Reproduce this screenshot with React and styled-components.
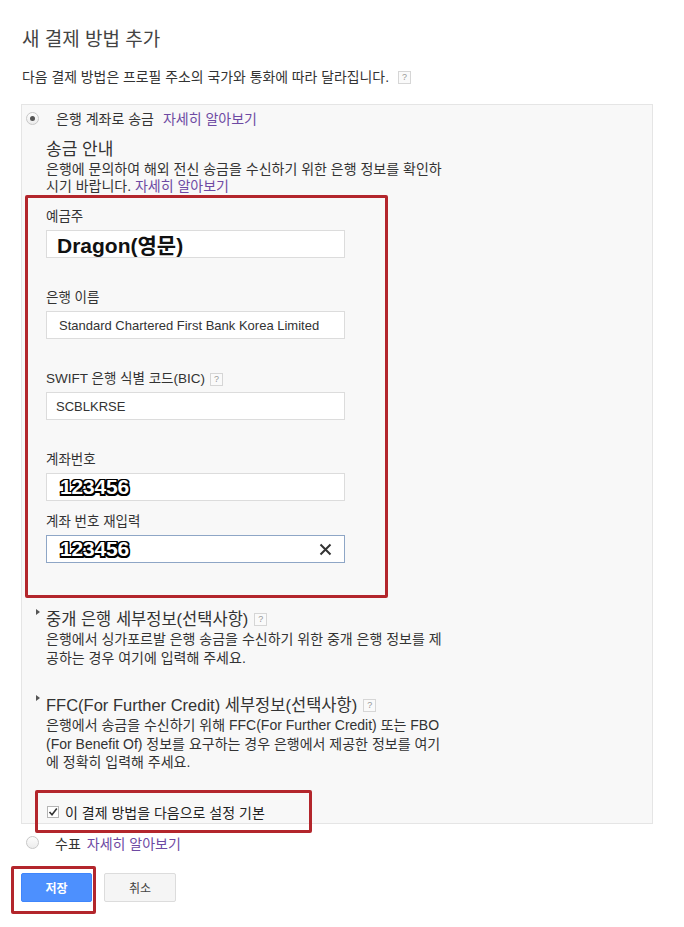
import React from "react";
import styled, { createGlobalStyle } from "styled-components";

const Global = createGlobalStyle`
  html, body { margin: 0; padding: 0; background: #fff; }
  body {
    font-family: "Liberation Sans", "Noto Sans CJK KR", Arial, sans-serif;
    color: #333;
    -webkit-font-smoothing: antialiased;
  }
`;

const Page = styled.div`
  padding: 28px 0 24px 21px;
  width: 630px;
`;

const Title = styled.h1`
  margin: 0;
  padding-left: 1px;
  font-size: 19px;
  line-height: 24px;
  font-weight: 400;
  color: #444;
`;

const Subtitle = styled.p`
  margin: 16px 0 0;
  padding-left: 1px;
  font-size: 13.9px;
  line-height: 18px;
  color: #333;
  display: flex;
  align-items: center;
  gap: 5px;
`;

const Help = styled.span`
  display: inline-flex;
  align-items: center;
  justify-content: center;
  width: 11px;
  height: 11px;
  border: 1px solid #d6d6d6;
  background: #fafafa;
  color: #999;
  font-size: 9px;
  line-height: 1;
  font-family: "Liberation Sans", Arial, sans-serif;
  vertical-align: middle;
  margin-left: ${(p) => p.$ml || 4}px;
`;

const Panel = styled.div`
  margin-top: 18px;
  width: 627px;
  background: #f8f8f8;
  border: 1px solid #e5e5e5;
  padding: 3px 0 1px 3px;
`;

const RadioRow = styled.div`
  display: flex;
  align-items: center;
  height: 20px;
  margin-left: ${(p) => p.$ml || 0}px;
  margin-top: ${(p) => p.$mt || 0}px;
  font-size: 14px;
  color: #333;
`;

const Radio = styled.span`
  width: 11px;
  height: 11px;
  border-radius: 50%;
  border: 1px solid #c8c8c8;
  background: linear-gradient(#fdfdfd, #ececec);
  display: inline-flex;
  align-items: center;
  justify-content: center;
  margin-right: ${(p) => p.$gap}px;
  flex: none;
  &::after {
    content: "";
    display: ${(p) => (p.$checked ? "block" : "none")};
    width: 5px;
    height: 5px;
    border-radius: 50%;
    background: #555;
  }
`;

const Link = styled.a`
  color: #6e4aa3;
  text-decoration: none;
  margin-left: ${(p) => p.$ml || 0}px;
`;

const InfoTitle = styled.div`
  margin-top: 11px;
  font-size: 17px;
  line-height: 22px;
  color: #333;
  margin-left: 21px;
`;

const Desc = styled.div`
  font-size: 14px;
  line-height: ${(p) => p.$lh || 17}px;
  color: #333;
  margin-left: ${(p) => p.$ml || 0}px;
`;

const Line = styled.span`
  display: block;
  white-space: nowrap;
`;

const Fields = styled.div`
  width: 339px;
  border: 3px solid #b3262c;
  border-radius: 2px;
  padding: 10px 0 32px 18px;
  box-sizing: content-box;
`;

const Field = styled.div`
  margin-top: ${(p) => p.$mt}px;
`;

const Label = styled.div`
  font-size: 13.5px;
  line-height: 16px;
  color: #333;
  display: flex;
  align-items: center;
  padding-top: 1px;
`;

const Input = styled.div`
  margin-top: 5px;
  width: 299px;
  height: 28px;
  box-sizing: border-box;
  background: #fff;
  border: 1px solid ${(p) => (p.$focus ? "#8ea6c6" : "#dcdcdc")};
  display: flex;
  align-items: center;
  justify-content: space-between;
  padding: 0 12px 0 ${(p) => p.$pl || 10}px;
  font-size: 13px;
  color: #333;
`;

const BigName = styled.span`
  font-size: 21px;
  font-weight: 700;
  color: #111;
`;

const Outlined = styled.span`
  font-size: 21px;
  font-weight: 700;
  color: #fff;
  letter-spacing: -0.2px;
  text-shadow:
    -1.5px -1.5px 0 #000, 1.5px -1.5px 0 #000, -1.5px 1.5px 0 #000, 1.5px 1.5px 0 #000,
    0 -1.5px 0 #000, 0 1.5px 0 #000, -1.5px 0 0 #000, 1.5px 0 0 #000;
`;

const Section = styled.div`
  margin-top: ${(p) => p.$mt}px;
`;

const SectionTitle = styled.div`
  font-size: 16.5px;
  line-height: 22px;
  color: #333;
  margin-left: 21px;
  display: flex;
  align-items: center;
  position: relative;
`;

const Caret = styled.span`
  position: absolute;
  left: -10px;
  top: 1px;
  width: 0;
  height: 0;
  border-top: 3.5px solid transparent;
  border-bottom: 3.5px solid transparent;
  border-left: 4px solid #555;
`;

const CheckRow = styled.div`
  position: relative;
  margin: 30px 0 0 22px;
  height: 20px;
  display: flex;
  align-items: center;
  font-size: 14px;
  color: #222;
`;

const Checkbox = styled.span`
  width: 10px;
  height: 10px;
  border: 1px solid #b5b5b5;
  background: #fff;
  display: inline-flex;
  align-items: center;
  justify-content: center;
  margin-right: 6px;
  flex: none;
`;

const Annotation = styled.span`
  position: absolute;
  border: 3px solid #b3262c;
  border-radius: 2px;
  pointer-events: none;
  left: ${(p) => p.$l}px;
  top: ${(p) => p.$t}px;
  width: ${(p) => p.$w}px;
  height: ${(p) => p.$h}px;
  box-sizing: border-box;
`;

const Buttons = styled.div`
  margin-top: 20px;
  display: flex;
  gap: 12px;
`;

const BtnWrap = styled.div`
  position: relative;
`;

const Button = styled.button`
  width: ${(p) => p.$w}px;
  height: 29px;
  border-radius: 2px;
  font-family: "Liberation Sans", "Noto Sans CJK KR", sans-serif;
  font-size: 12px;
  cursor: pointer;
  color: ${(p) => (p.$primary ? "#fff" : "#444")};
  background: ${(p) => (p.$primary ? "#4d90fe" : "#f5f5f5")};
  border: 1px solid ${(p) => (p.$primary ? "#3f86fc" : "#dcdcdc")};
  font-weight: ${(p) => (p.$primary ? 700 : 400)};
`;

export default function App() {
  return (
    <Page>
      <Global />
      <Title>새 결제 방법 추가</Title>
      <Subtitle>
        다음 결제 방법은 프로필 주소의 국가와 통화에 따라 달라집니다.
        <Help $ml={0}>?</Help>
      </Subtitle>

      <Panel>
        <RadioRow $ml={1}>
          <Radio $checked $gap={17} />
          은행 계좌로 송금
          <Link $ml={9} href="#">자세히 알아보기</Link>
        </RadioRow>
        <InfoTitle>송금 안내</InfoTitle>
        <Desc $ml={21}>
          <Line>은행에 문의하여 해외 전신 송금을 수신하기 위한 은행 정보를 확인하</Line>
          <Line>
            시기 바랍니다. <Link href="#">자세히 알아보기</Link>
          </Line>
        </Desc>

        <Fields>
          <Field $mt={0}>
            <Label>예금주</Label>
            <Input>
              <BigName>Dragon(영문)</BigName>
            </Input>
          </Field>
          <Field $mt={31}>
            <Label>은행 이름</Label>
            <Input $pl={12}>Standard Chartered First Bank Korea Limited</Input>
          </Field>
          <Field $mt={31}>
            <Label>
              SWIFT 은행 식별 코드(BIC)
              <Help $ml={5}>?</Help>
            </Label>
            <Input $pl={9}>SCBLKRSE</Input>
          </Field>
          <Field $mt={31}>
            <Label>계좌번호</Label>
            <Input $pl={13}>
              <Outlined>123456</Outlined>
            </Input>
          </Field>
          <Field $mt={12}>
            <Label>계좌 번호 재입력</Label>
            <Input $pl={13} $focus>
              <Outlined>123456</Outlined>
              <svg width="13" height="13" viewBox="0 0 13 13">
                <path d="M1.5 1.5 L11.5 11.5 M11.5 1.5 L1.5 11.5" stroke="#333" strokeWidth="2" />
              </svg>
            </Input>
          </Field>
        </Fields>

        <Section $mt={10}>
          <SectionTitle>
            <Caret />
            중개 은행 세부정보(선택사항)
            <Help $ml={6}>?</Help>
          </SectionTitle>
          <Desc $ml={21} $lh={18.5}>
            <Line>은행에서 싱가포르발 은행 송금을 수신하기 위한 중개 은행 정보를 제</Line>
            <Line>공하는 경우 여기에 입력해 주세요.</Line>
          </Desc>
        </Section>

        <Section $mt={27}>
          <SectionTitle>
            <Caret />
            FFC(For Further Credit) 세부정보(선택사항)
            <Help $ml={6}>?</Help>
          </SectionTitle>
          <Desc $ml={21} $lh={18.5}>
            <Line>은행에서 송금을 수신하기 위해 FFC(For Further Credit) 또는 FBO</Line>
            <Line>(For Benefit Of) 정보를 요구하는 경우 은행에서 제공한 정보를 여기</Line>
            <Line>에 정확히 입력해 주세요.</Line>
          </Desc>
        </Section>

        <CheckRow>
          <Checkbox>
            <svg width="10" height="10" viewBox="0 0 10 10">
              <path d="M1.5 5 L4 7.8 L8.8 1.5" stroke="#333" strokeWidth="1.6" fill="none" />
            </svg>
          </Checkbox>
          이 결제 방법을 다음으로 설정 기본
          <Annotation $l={-12} $t={-12} $w={277} $h={43} />
        </CheckRow>
      </Panel>

      <RadioRow $ml={5} $mt={9}>
        <Radio $gap={16} />
        수표
        <Link $ml={6} href="#">자세히 알아보기</Link>
      </RadioRow>

      <Buttons>
        <BtnWrap>
          <Button $primary $w={71}>저장</Button>
          <Annotation $l={-10} $t={-7} $w={85} $h={48} />
        </BtnWrap>
        <Button $w={72}>취소</Button>
      </Buttons>
    </Page>
  );
}
